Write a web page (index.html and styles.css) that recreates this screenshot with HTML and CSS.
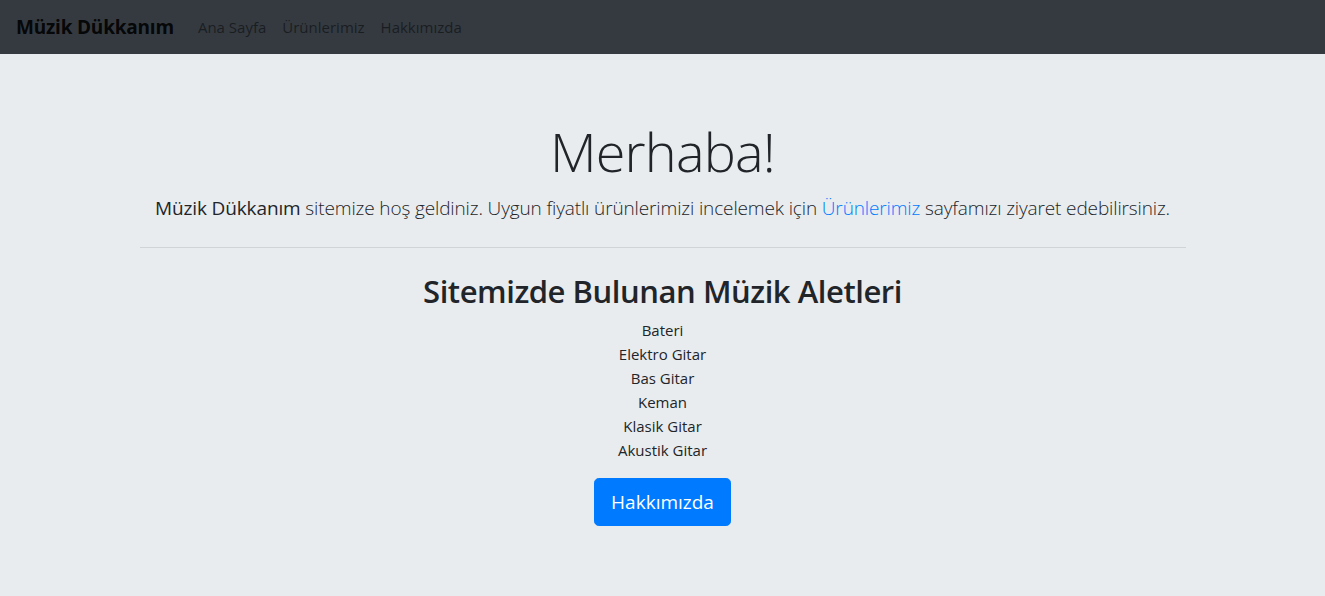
FILE: index.html
```html
<!DOCTYPE html>
<html lang="tr">
<head>
<meta charset="utf-8">
<title>Müzik Dükkanım</title>
<link rel="stylesheet" href="styles.css">
</head>
<body>
<nav class="navbar">
  <a class="brand" href="#">Müzik Dükkanım</a>
  <ul class="nav-links">
    <li><a href="#">Ana Sayfa</a></li>
    <li><a href="#">Ürünlerimiz</a></li>
    <li><a href="#">Hakkımızda</a></li>
  </ul>
</nav>
<main class="jumbotron">
  <h1 class="display">Merhaba!</h1>
  <p class="lead"><span class="lead-strong">Müzik Dükkanım</span> sitemize hoş geldiniz. Uygun fiyatlı ürünlerimizi incelemek için <a href="#">Ürünlerimiz</a> sayfamızı ziyaret edebilirsiniz.</p>
  <hr class="divider">
  <h2 class="section-title">Sitemizde Bulunan Müzik Aletleri</h2>
  <ul class="instruments">
    <li>Bateri</li>
    <li>Elektro Gitar</li>
    <li>Bas Gitar</li>
    <li>Keman</li>
    <li>Klasik Gitar</li>
    <li>Akustik Gitar</li>
  </ul>
  <a class="btn" href="#">Hakkımızda</a>
</main>
</body>
</html>
```
FILE: styles.css
```css
* { box-sizing: border-box; }
html, body { height: 100%; }
body {
  margin: 0;
  font-family: "Open Sans", "Noto Sans", sans-serif;
  font-size: 16px;
  line-height: 1.5;
  color: #212529;
  background: #e9ecef;
  display: flex;
  flex-direction: column;
}
a { text-decoration: none; }
.navbar {
  display: flex;
  align-items: center;
  height: 54px;
  padding: 0 16px;
  background: #343a40;
}
.brand {
  font-size: 19px;
  font-weight: 700;
  letter-spacing: -0.2px;
  color: rgba(0,0,0,.9);
  margin-right: 16px;
  line-height: 30px;
}
.nav-links {
  display: flex;
  list-style: none;
  margin: 0;
  padding: 0;
}
.nav-links a {
  display: block;
  padding: 8px;
  font-size: 15px;
  color: rgba(0,0,0,.5);
}
.jumbotron {
  flex: 1;
  padding: 64px 32px;
  text-align: center;
}
.display {
  margin: 0 0 8px;
  font-size: 54px;
  font-weight: 300;
  letter-spacing: -0.8px;
  line-height: 67.2px;
}
.lead {
  margin: 0 0 16px;
  font-size: 19px;
  font-weight: 300;
  letter-spacing: -0.13px;
  line-height: 30px;
}
.lead-strong { font-weight: 400; }
.lead a { color: #007bff; }
.divider {
  max-width: 1046px;
  margin: 24px auto;
  border: 0;
  border-top: 1px solid rgba(0,0,0,.1);
}
.section-title {
  margin: 0 0 7px;
  font-size: 31px;
  font-weight: 600;
  letter-spacing: -0.45px;
  line-height: 38.4px;
}
.instruments {
  list-style: none;
  margin: 0 0 16px;
  padding: 0;
  font-size: 15px;
  line-height: 24px;
}
.btn {
  display: inline-block;
  padding: 8px 16px;
  font-size: 19px;
  line-height: 30px;
  color: #fff;
  background: #007bff;
  border: 1px solid #007bff;
  border-radius: 4.8px;
}
```
